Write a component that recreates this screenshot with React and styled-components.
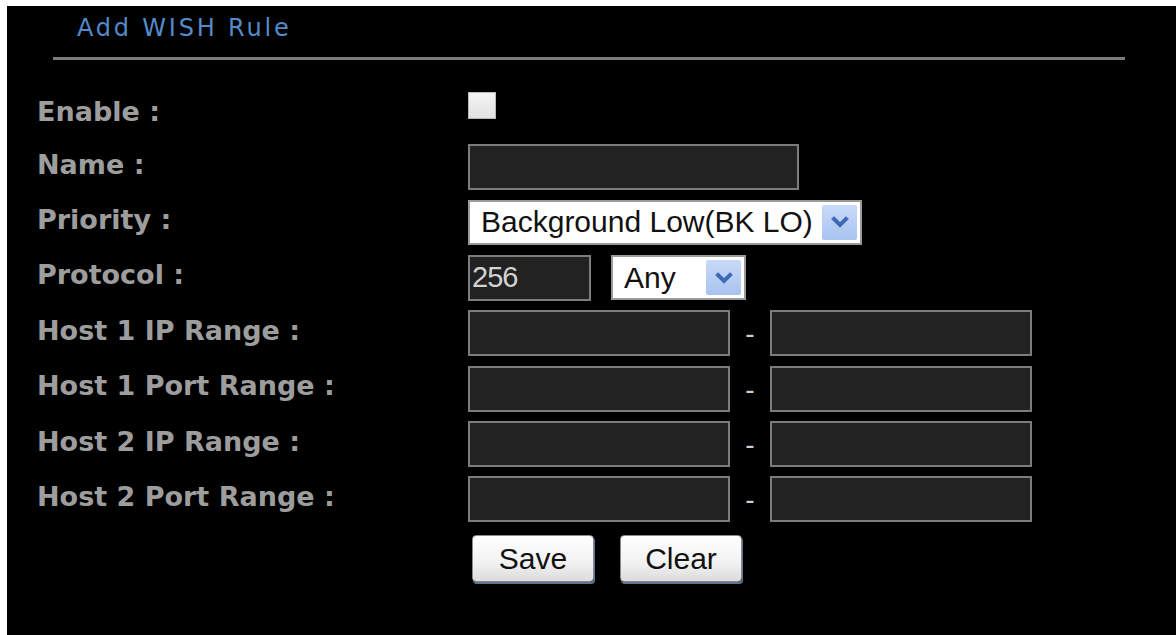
import styled, { createGlobalStyle } from 'styled-components'

const GlobalStyle = createGlobalStyle`
  html, body {
    margin: 0;
    padding: 0;
    background: #fff;
  }
  * {
    box-sizing: border-box;
  }
`

const rows = [
  { id: 'host1ip', label: 'Host 1 IP Range :' },
  { id: 'host1port', label: 'Host 1 Port Range :' },
  { id: 'host2ip', label: 'Host 2 IP Range :' },
  { id: 'host2port', label: 'Host 2 Port Range :' },
]

function Chevron() {
  return (
    <svg width="20" height="14" viewBox="0 0 20 14">
      <polyline points="4,4 10,10 16,4" fill="none" stroke="#3f68b5" strokeWidth="4" strokeLinecap="square" />
    </svg>
  )
}

function Dropdown({ value, width }) {
  return (
    <SelectBox $width={width}>
      <span className="select__value">{value}</span>
      <ArrowButton>
        <Chevron />
      </ArrowButton>
    </SelectBox>
  )
}

function App() {
  return (
    <Page>
      <GlobalStyle />
      <Panel>
        <Title>Add WISH Rule</Title>
        <Divider />
        <Form>
          <Label $first>Enable :</Label>
          <Cell>
            <Check type="checkbox" />
          </Cell>

          <Label>Name :</Label>
          <Cell>
            <TextBox $width={331} />
          </Cell>

          <Label>Priority :</Label>
          <Cell>
            <Dropdown value="Background Low(BK LO)" width={394} />
          </Cell>

          <Label>Protocol :</Label>
          <Cell $gap={20}>
            <TextBox $width={123} defaultValue="256" />
            <Dropdown value="Any" width={135} />
          </Cell>

          {rows.map(function (item) {
            return [
              <Label key={item.id + '-label'}>{item.label}</Label>,
              <Cell key={item.id + '-cell'}>
                <TextBox $width={262} />
                <Dash>-</Dash>
                <TextBox $width={262} />
              </Cell>,
            ]
          })}

          <span />
          <Buttons>
            <Button>Save</Button>
            <Button>Clear</Button>
          </Buttons>
        </Form>
      </Panel>
    </Page>
  )
}

const Page = styled.div`
  padding: 6px 0 0 7px;
  height: 100vh;
`

const Panel = styled.div`
  background: #000;
  height: 100%;
  overflow: hidden;
`

const Title = styled.h2`
  margin: 9px 0 0 70px;
  font-family: 'DejaVu Sans', Verdana, sans-serif;
  font-weight: normal;
  font-size: 24px;
  line-height: 26px;
  letter-spacing: 2.8px;
  color: #548ac9;
`

const Divider = styled.div`
  margin: 16px 0 0 46px;
  width: 1072px;
  height: 3px;
  background: #7b7b7b;
`

const Form = styled.div`
  margin-top: 24px;
  padding-left: 30px;
  display: grid;
  grid-template-columns: 431px 1fr;
  grid-auto-rows: 55.4px;
  align-items: center;
`

const Label = styled.div`
  font-family: 'DejaVu Sans', Verdana, sans-serif;
  font-weight: bold;
  font-size: 27px;
  line-height: 32px;
  color: #9d9d9d;
  margin-bottom: ${(p) => (p.$first ? 0 : 5)}px;
  white-space: nowrap;
`

const Cell = styled.div`
  display: flex;
  align-items: center;
  gap: ${(p) => p.$gap || 0}px;
`

const Check = styled.input`
  appearance: none;
  margin: 0 0 12px 0;
  width: 28px;
  height: 27px;
  border: 1px solid #b8b8b8;
  background: linear-gradient(#f4f4f4, #e2e2e2);
`

const TextBox = styled.input`
  width: ${(p) => p.$width}px;
  height: 46px;
  margin: 0;
  padding: 0 0 0 2px;
  border: 2px solid #7c7c7c;
  background: #222;
  color: #d2d2d2;
  font-family: 'Liberation Sans', Arial, sans-serif;
  font-size: 29px;
  letter-spacing: -1px;
  outline: none;
`

const SelectBox = styled.div`
  width: ${(p) => p.$width}px;
  height: 45px;
  display: flex;
  align-items: center;
  justify-content: space-between;
  padding: 0 3px 0 11px;
  border: 2px solid #9a9a9a;
  background: #fff;
  font-family: 'Liberation Sans', Arial, sans-serif;
  font-size: 30px;
  color: #111;
  white-space: nowrap;

  .select__value {
    line-height: 1;
  }
`

const ArrowButton = styled.span`
  display: flex;
  align-items: center;
  justify-content: center;
  width: 35px;
  height: 35px;
  background: linear-gradient(#c8daf8, #a9c3ef);
  border-radius: 2px;
`

const Dash = styled.span`
  width: 40px;
  text-align: center;
  font-family: 'Liberation Sans', Arial, sans-serif;
  font-size: 28px;
  color: #d0d0d0;
  padding-top: 2px;
`

const Buttons = styled.div`
  display: flex;
  gap: 26px;
  padding-left: 4px;
  align-self: start;
  margin-top: 8px;
`

const Button = styled.button`
  width: 122px;
  height: 47px;
  padding: 0;
  border: 1px solid #8a8a8a;
  border-radius: 4px;
  background: linear-gradient(#ffffff, #f1f1f1 60%, #dcdcdc);
  box-shadow: 1px 2px 0 #5d7592;
  font-family: 'Liberation Sans', Arial, sans-serif;
  font-size: 30px;
  color: #111;
`

export default App
